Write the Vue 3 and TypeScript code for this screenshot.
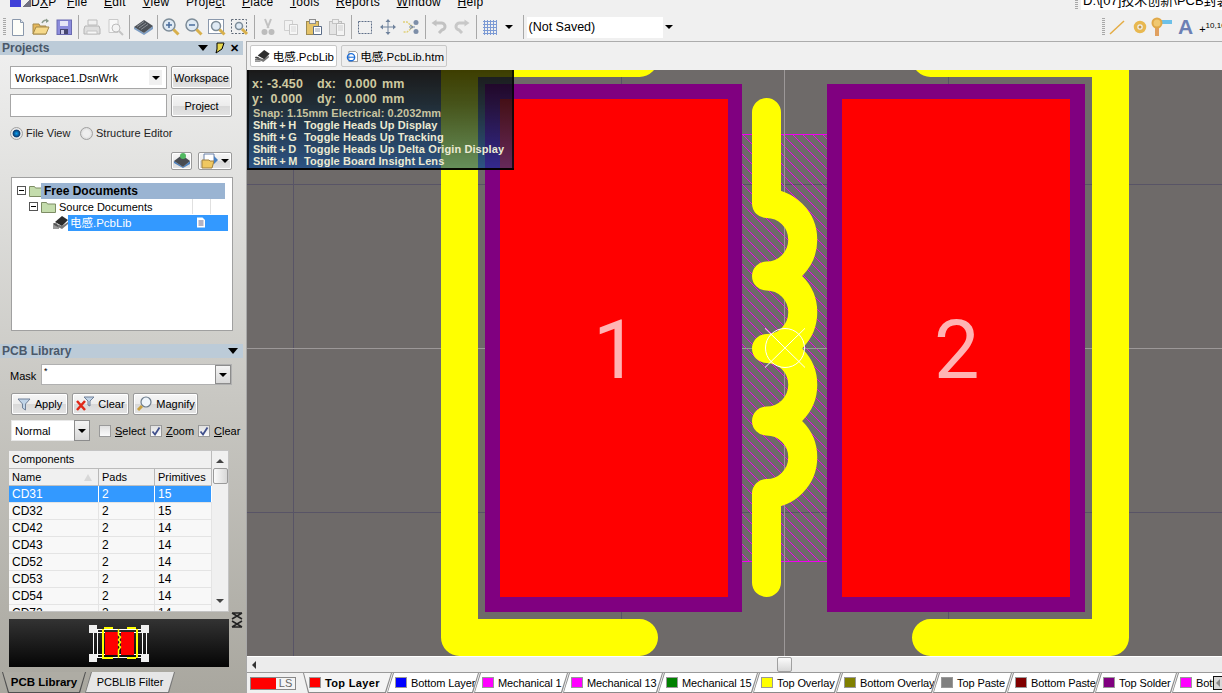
<script setup lang="ts">
const menus: [string, string, string][] = [
  ['', 'F', 'ile'], ['', 'E', 'dit'], ['', 'V', 'iew'], ['Proje', 'c', 't'],
  ['', 'P', 'lace'], ['', 'T', 'ools'], ['', 'R', 'eports'], ['', 'W', 'indow'], ['', 'H', 'elp'],
]
const rows = [
  ['CD31', '2', '15'], ['CD32', '2', '15'], ['CD42', '2', '14'], ['CD43', '2', '14'],
  ['CD52', '2', '14'], ['CD53', '2', '14'], ['CD54', '2', '14'], ['CD72', '2', '14'],
]
const layers = [
  { name: 'Top Layer', color: '#ff0000', width: 89, active: true },
  { name: 'Bottom Layer', color: '#0000ff', width: 92 },
  { name: 'Mechanical 1', color: '#ff00ff', width: 94 },
  { name: 'Mechanical 13', color: '#ff00ff', width: 100 },
  { name: 'Mechanical 15', color: '#008000', width: 100 },
  { name: 'Top Overlay', color: '#ffff00', width: 88 },
  { name: 'Bottom Overlay', color: '#808000', width: 102 },
  { name: 'Top Paste', color: '#808080', width: 79 },
  { name: 'Bottom Paste', color: '#800000', width: 93 },
  { name: 'Top Solder', color: '#800080', width: 82 },
  { name: 'Bottom Solder', color: '#ff00ff', width: 90 },
]
const coils = 'M766.5 112.5V203.5A36.25 36.25 0 0 1 766.5 276A36.25 36.25 0 0 1 766.5 348.5A36.25 36.25 0 0 1 766.5 421A36.25 36.25 0 0 1 766.5 493.5V582.5'
</script>

<template>
  <div class="app">
    <div class="menubar">
      <div class="logo"><i class="logo-a"></i><i class="logo-b"></i></div>
      <span class="dxp">D<u>X</u>P</span>
      <div class="menus">
        <span v-for="m in menus" :key="m[1] + m[2]">{{ m[0] }}<u>{{ m[1] }}</u>{{ m[2] }}</span>
      </div>
      <div class="grip-small"></div>
      <div class="path">D:\[07]技术创新\PCB封装</div>
    </div>

    <div class="toolbar">
      <div class="grip"></div>
      <!-- new -->
      <div class="tb"><svg width="18" height="20" viewBox="0 0 18 20"><path d="M3.5 2.5h8l3 3v13h-11z" fill="#fdfdf8" stroke="#8a98ac"/><path d="M11.5 2.5v3h3" fill="#dfe5ee" stroke="#8a98ac"/></svg></div>
      <!-- open -->
      <div class="tb"><svg width="20" height="20" viewBox="0 0 20 20"><path d="M2 7h6l1 2h6v8H2z" fill="#e6b75a" stroke="#a48a4c"/><path d="M2 17l3-7h13l-3 7z" fill="#f6d98a" stroke="#a48a4c"/><path d="M11 6q2-4 6-2" fill="none" stroke="#8a9a8a" stroke-width="1.5"/><path d="M15 1.5l3 2.5-3 2z" fill="#8a9a8a"/></svg></div>
      <!-- save -->
      <div class="tb"><svg width="18" height="18" viewBox="0 0 18 18"><rect x="2" y="2" width="14.500" height="14.500" fill="#8c8cdc" stroke="#6a6ab0"/><rect x="5" y="3" width="8" height="5" fill="#e6e6f6"/><rect x="5" y="11" width="8" height="5" fill="#45456e"/><rect x="6" y="12" width="3" height="4" fill="#c9c9e6"/></svg></div>
      <div class="sep"></div>
      <!-- print disabled -->
      <div class="tb"><svg width="20" height="20" viewBox="0 0 20 20"><path d="M6 3h9v5H6z" fill="#f0f0f0" stroke="#bcbcbc"/><path d="M3 9h14l1 3v5H2v-5z" fill="#dedede" stroke="#b4b4b4"/><path d="M5 14h10v3H5z" fill="#f6f6f6" stroke="#c4c4c4"/></svg></div>
      <!-- preview disabled -->
      <div class="tb"><svg width="20" height="20" viewBox="0 0 20 20"><path d="M4 2.500h9v13H4z" fill="#f8f8f8" stroke="#cacaca"/><circle cx="11" cy="11" r="4" fill="#f4f4f4" stroke="#bcbcbc"/><path d="M14 14l4 4" stroke="#c4c4c4" stroke-width="2"/></svg></div>
      <div class="sep"></div>
      <!-- chip -->
      <div class="tb"><svg width="22" height="20" viewBox="0 0 22 20"><path d="M2 10l10 6 9-7v3l-9 6-10-6z" fill="#7e9ec4"/><path d="M2 10l10-7 9 6-9 7z" fill="#4d5258"/><path d="M5 9.500l7-5M7 11l7-5M9 12.500l7-5" stroke="#8c9096"/></svg></div>
      <div class="sep"></div>
      <!-- zooms -->
      <div class="tb"><svg width="20" height="20" viewBox="0 0 20 20"><circle cx="8" cy="8" r="6" fill="#dfeaf4" stroke="#7d8c98" stroke-width="1.500"/><path d="M5 8h6M8 5v6" stroke="#4a6c9c" stroke-width="1.500"/><path d="M12.500 12.500l5 5" stroke="#d8b04c" stroke-width="3"/></svg></div>
      <div class="tb"><svg width="20" height="20" viewBox="0 0 20 20"><circle cx="8" cy="8" r="6" fill="#dfeaf4" stroke="#7d8c98" stroke-width="1.500"/><path d="M5 8h6" stroke="#4a6c9c" stroke-width="1.500"/><path d="M12.500 12.500l5 5" stroke="#d8b04c" stroke-width="3"/></svg></div>
      <div class="tb"><svg width="20" height="20" viewBox="0 0 20 20"><rect x="1.500" y="2.500" width="15" height="14" fill="#fff" stroke="#8a98ac"/><circle cx="9" cy="9" r="4.500" fill="#dfeaf4" stroke="#7d8c98" stroke-width="1.500"/><path d="M12.500 12.500l5 5" stroke="#d8b04c" stroke-width="3"/></svg></div>
      <div class="tb"><svg width="20" height="20" viewBox="0 0 20 20"><rect x="1.500" y="2.500" width="15" height="14" fill="#f0f0f0" stroke="#606a78" stroke-dasharray="2 1.500"/><circle cx="9" cy="9" r="3.500" fill="#dfeaf4" stroke="#7d8c98" stroke-width="1.500"/><path d="M12 12l5 5" stroke="#d8b04c" stroke-width="3"/></svg></div>
      <div class="sep"></div>
      <!-- cut -->
      <div class="tb"><svg width="18" height="20" viewBox="0 0 18 20"><path d="M6 2l3.500 9M12 2l-3.500 9" stroke="#c2c2c2" stroke-width="2"/><circle cx="5.500" cy="15" r="3" fill="#bcbcbc"/><circle cx="12.500" cy="15" r="3" fill="#bcbcbc"/></svg></div>
      <div class="tb"><svg width="18" height="20" viewBox="0 0 18 20"><path d="M2.500 3.500h8v10h-8z" fill="#f2f2f2" stroke="#d0d0d0"/><path d="M7.500 7.500h8v10h-8z" fill="#f6f6f6" stroke="#c8c8c8"/><path d="M9 10h5M9 12h5M9 14h5" stroke="#d8d8d8"/></svg></div>
      <div class="tb"><svg width="20" height="20" viewBox="0 0 20 20"><rect x="2.500" y="4.500" width="12" height="13" fill="#e4c268" stroke="#9c8a52"/><rect x="5.500" y="2.500" width="6" height="4" fill="#eee" stroke="#8c8c8c"/><path d="M9.500 9.500h8v8h-8z" fill="#fff" stroke="#5a6c88"/><path d="M11 12h5M11 14h5" stroke="#9aa4b4"/></svg></div>
      <div class="tb"><svg width="20" height="20" viewBox="0 0 20 20"><rect x="2.500" y="4.500" width="12" height="13" fill="#e4e4e4" stroke="#c0c0c0"/><rect x="5.500" y="2.500" width="6" height="4" fill="#eee" stroke="#c4c4c4"/><path d="M9.500 6.500h8v12h-8z" fill="#f4f4f4" stroke="#bcbcbc"/><path d="M11 9h5M11 11h5M11 13h5" stroke="#cfcfcf"/></svg></div>
      <div class="sep"></div>
      <!-- select rect -->
      <div class="tb"><svg width="18" height="18" viewBox="0 0 18 18"><rect x="2.500" y="3.500" width="13" height="12" fill="none" stroke="#5f6f88" stroke-dasharray="2 1"/></svg></div>
      <!-- move -->
      <div class="tb"><svg width="18" height="18" viewBox="0 0 18 18"><path d="M9 2v14M2 9h14" stroke="#6f829c"/><path d="M9 1l2.500 3h-5zM9 17l2.500-3h-5zM1 9l3-2.500v5zM17 9l-3-2.500v5z" fill="#6f829c"/></svg></div>
      <!-- shuffle -->
      <div class="tb"><svg width="20" height="18" viewBox="0 0 20 18"><path d="M2 4h4l6 5-6 5H2" fill="none" stroke="#e0d07a" stroke-dasharray="2 1" stroke-width="1.500"/><path d="M8 9h6" stroke="#7a8ca4"/><circle cx="15" cy="4.500" r="2.500" fill="#7d8ea8"/><circle cx="15" cy="13.500" r="2.500" fill="#7d8ea8"/><path d="M9 7l3 2-3 2" fill="none" stroke="#7a8ca4"/></svg></div>
      <div class="sep"></div>
      <!-- undo / redo -->
      <div class="tb"><svg width="18" height="18" viewBox="0 0 18 18"><path d="M5 5h6a3.500 3.500 0 0 1 1 7l-3 3" fill="none" stroke="#c2c2c2" stroke-width="3"/><path d="M1.500 5l5-3.500v7z" fill="#c2c2c2"/></svg></div>
      <div class="tb"><svg width="18" height="18" viewBox="0 0 18 18"><path d="M13 5H7a3.500 3.500 0 0 0-1 7l3 3" fill="none" stroke="#c8c8c8" stroke-width="3"/><path d="M16.500 5l-5-3.500v7z" fill="#c8c8c8"/></svg></div>
      <div class="sep"></div>
      <!-- grid -->
      <div class="tb"><svg width="16" height="16" viewBox="0 0 16 16"><path d="M1 2.500h14M1 5.500h14M1 8.500h14M1 11.500h14M1 14.500h14M2.500 1v15M5.500 1v15M8.500 1v15M11.500 1v15M14.500 1v15" stroke="#7c9ad4"/></svg></div>
      <div class="tb-drop"><i class="arrow"></i></div>
      <div class="sep sep-combo"></div>
      <div class="combo-saved">
        <span>(Not Saved)</span>
        <div class="saved-drop"><i class="arrow"></i></div>
      </div>
      <div class="spring"></div>
      <div class="grip grip-r"></div>
      <div class="tools-r">
        <svg width="18" height="18" viewBox="0 0 18 18"><path d="M2 16L16 3" stroke="#e4ac44" stroke-width="1.500"/></svg>
        <svg width="18" height="18" viewBox="0 0 18 18"><circle cx="9" cy="9" r="4.500" fill="none" stroke="#e8b850" stroke-width="3.500"/><circle cx="9" cy="9" r="1.500" fill="#c49848"/></svg>
        <svg class="via" width="24" height="20" viewBox="0 0 24 20"><rect x="10" y="3" width="13" height="4" fill="#6cc0e8"/><path d="M6 9h4v10H6z" fill="#e0a060"/><circle cx="8" cy="6" r="4.500" fill="#f0c870" stroke="#e0a848" stroke-width="2"/></svg>
        <span class="big-a">A</span>
        <span class="coord"><b>+</b><sup>10,10</sup></span>
      </div>
    </div>

    <div class="main">
      <aside class="side">
        <div class="ph">
          <span>Projects</span>
          <i class="arrow big"></i>
          <svg class="pin" width="12" height="12" viewBox="0 0 12 12"><path d="M4 1h7L9 7 3 11l1-4z" fill="#e8d850" stroke="#000"/></svg>
          <span class="ph-x">✕</span>
        </div>
        <div class="wsrow r1">
          <div class="fld"><span>Workspace1.DsnWrk</span><div class="mini-drop"><i class="arrow"></i></div></div>
          <button class="btn">Workspace</button>
        </div>
        <div class="wsrow r2">
          <div class="fld"></div>
          <button class="btn">Project</button>
        </div>
        <div class="radios">
          <i class="radio on"></i><span class="lab-file">File View</span>
          <i class="radio"></i><span>Structure Editor</span>
        </div>
        <div class="iconbtns">
          <button class="btn ibtn"><svg width="18" height="16" viewBox="0 0 18 16"><path d="M1 8l9 6 7-6v3l-7 4-9-5z" fill="#4a80c0"/><path d="M1 8l8-6 8 6-7 6z" fill="#484c52"/><circle cx="10" cy="3" r="3" fill="#50b860"/></svg></button>
          <button class="btn ibtn2"><svg width="18" height="16" viewBox="0 0 18 16"><path d="M3 1h10v9H3z" fill="#fff" stroke="#6880a8"/><path d="M1 7h7l1 1h4l-2 7H1z" fill="#f0c860" stroke="#a08040"/><path d="M13 3l4 4-4 4z" fill="#4a80c0"/></svg><i class="arrow"></i></button>
        </div>
        <div class="tree">
          <div class="trow t1">
            <i class="exp"></i><svg class="folder" width="15" height="13" viewBox="0 0 15 13"><path d="M.5 2.500h5l1 1.500h8v8.500H.5z" fill="#c4dcac" stroke="#7d8c64"/></svg>
            <span class="hl-free">Free Documents</span>
          </div>
          <div class="trow t2">
            <i class="exp"></i><svg class="folder" width="15" height="13" viewBox="0 0 15 13"><path d="M.5 2.500h5l1 1.500h8v8.500H.5z" fill="#c4dcac" stroke="#7d8c64"/></svg>
            <span class="srcdocs">Source Documents</span><i class="cellb"></i><i class="cellb"></i>
          </div>
          <div class="trow t3">
            <svg width="16" height="15" viewBox="0 0 16 15"><path d="M1 10l8 4 6-5v-2l-6 4-8-3z" fill="#777"/><path d="M2 7l7-6 6 4-6 6z" fill="#2c2c2c"/><path d="M0 9h4M0 11h5M0 13h6" stroke="#333"/></svg>
            <span class="hl-sel">电感.PcbLib<svg width="10" height="11" viewBox="0 0 10 11"><path d="M1 .5h5.500L9 3v7.500H1z" fill="#fff"/><path d="M2.500 4h5M2.500 6h5M2.500 8h5" stroke="#668"/></svg></span>
          </div>
        </div>

        <div class="ph ph2">
          <span>PCB Library</span>
          <i class="arrow big"></i>
        </div>
        <div class="maskrow">
          <span class="mask-lab">Mask</span>
          <div class="mask-fld"><span>*</span><div class="sq-drop"><i class="arrow"></i></div></div>
        </div>
        <div class="btnrow">
          <button class="btn b-apply"><svg width="14" height="14" viewBox="0 0 14 14"><path d="M1 2h12L8.500 7v6l-3-2V7z" fill="#c0d4e8" stroke="#708098"/></svg>Apply</button>
          <button class="btn b-clear"><svg width="20" height="16" viewBox="0 0 20 16"><path d="M1 5l8 9M9 5l-8 9" stroke="#e02818" stroke-width="2.500"/><path d="M8 1h10l-4 4v5l-2-1V5z" fill="#c0d4e8" stroke="#708098"/></svg>Clear</button>
          <button class="btn b-mag"><svg width="16" height="16" viewBox="0 0 16 16"><circle cx="10" cy="6" r="5" fill="#eef4fa" stroke="#6c7c8c" stroke-width="1.200"/><path d="M6 10l-4 4" stroke="#c8a040" stroke-width="3"/></svg>Magnify</button>
        </div>
        <div class="normrow">
          <div class="norm-fld"><span>Normal</span><div class="sq-drop"><i class="arrow"></i></div></div>
          <label class="cb"><i class="box"></i><span><u>S</u>elect</span></label>
          <label class="cb cb-z"><i class="box on"><svg width="10" height="10" viewBox="0 0 10 10"><path d="M1.500 5.500L4 8.500 8.500 1.500" fill="none" stroke="#40508c" stroke-width="1.800"/></svg></i><span><u>Z</u>oom</span></label>
          <label class="cb cb-c"><i class="box on"><svg width="10" height="10" viewBox="0 0 10 10"><path d="M1.500 5.500L4 8.500 8.500 1.500" fill="none" stroke="#40508c" stroke-width="1.800"/></svg></i><span><u>C</u>lear Existing</span></label>
        </div>
        <div class="ctable">
          <div class="ctable-body">
            <div class="cap">Components</div>
            <div class="grid-row head">
              <span class="name-h">Name<i class="sort"></i></span><span>Pads</span><span>Primitives</span>
            </div>
            <div v-for="(r, i) in rows" :key="r[0]" class="grid-row" :class="{ sel: i === 0 }">
              <span>{{ r[0] }}</span><span>{{ r[1] }}</span><span>{{ r[2] }}</span>
            </div>
          </div>
          <div class="vscroll">
            <i class="up"></i>
            <i class="thumb"></i>
            <i class="dn"></i>
          </div>
        </div>
        <div class="prevrow">
          <div class="preview">
            <svg width="220" height="48" viewBox="0 0 220 48" shape-rendering="crispEdges">
              <path d="M84 10.500h53M84 13.500h53M84 38.500h53M84 35.500h53M84.500 10v28M88.500 10v28M133.500 10v28M137.500 10v28" stroke="#fff" fill="none"/>
              <path d="M93.500 10v29M127.500 10v29" stroke="#ff0" stroke-width="2" fill="none"/>
              <path d="M95 9h9M118 9h9" stroke="#ff0" stroke-width="2"/>
              <path d="M93 39h11M118 39h9" stroke="#ff0" stroke-width="2"/>
              <rect x="96" y="13" width="13" height="23" fill="#f00"/>
              <rect x="112" y="13" width="13" height="23" fill="#f00"/>
              <path d="M109.500 10v6l2 2-2 3 2 2-2 3 2 2-2 3v8" fill="none" stroke="#ff0" stroke-width="1.500" shape-rendering="auto"/>
              <rect x="80" y="6" width="8" height="8" fill="#f0f0f0"/>
              <rect x="132" y="6" width="8" height="8" fill="#f0f0f0"/>
              <rect x="80" y="35" width="8" height="8" fill="#f0f0f0"/>
              <rect x="132" y="35" width="8" height="8" fill="#f0f0f0"/>
            </svg>
          </div>
          <svg class="xpand" width="12" height="16" viewBox="0 0 12 16"><path d="M1 1h10M1 1l10 6M11 1L1 7M1 15h10M1 15L11 9M11 15L1 9" fill="none" stroke="#222" stroke-width="1.500"/></svg>
        </div>
        <div class="sidetabs">
          <div class="stab active"><div><b>PCB Library</b></div></div>
          <div class="stab"><div>PCBLIB Filter</div></div>
        </div>
      </aside>

      <section class="work">
        <div class="doctabs">
          <div class="doctab">
            <svg width="18" height="16" viewBox="0 0 17 15"><path d="M1 10l8 4 6-5v-2l-6 4-8-3z" fill="#777"/><path d="M3 7l7-6 6 4-6 6z" fill="#2c2c2c"/><path d="M0 9h4M0 11h5M0 13h6" stroke="#333"/></svg>
            <span>电感.PcbLib</span>
          </div>
          <div class="doctab dim">
            <svg width="18" height="17" viewBox="0 0 17 16"><path d="M4 1h9l3 3v11H4z" fill="#fff" stroke="#777"/><circle cx="7" cy="9" r="5" fill="none" stroke="#1a6cd8" stroke-width="2"/><path d="M3 9h8" stroke="#1a6cd8" stroke-width="1.500"/></svg>
            <span>电感.PcbLib.htm</span>
          </div>
        </div>
        <div class="canvas">
          <svg class="board" width="975" height="586" viewBox="247 70 975 586" shape-rendering="crispEdges">
            <defs>
              <pattern id="hatch" x="742" y="134" width="10" height="10" patternUnits="userSpaceOnUse">
                <path d="M-1 -1L11 11" stroke="#f000f0" stroke-width="1"/>
              </pattern>
            </defs>
            <path d="M293.500 70V656M621.500 70V656M948.500 70V656M247 184.500H1222M247 512.500H1222" stroke="#585466" fill="none"/>
            <rect x="742" y="134" width="85" height="428" fill="url(#hatch)"/>
            <path d="M742 134.500H827M742 561.500H827" stroke="#f000f0"/>
            <path d="M784.500 70V656M247 348.500H1222" stroke="#9c9898"/>
            <rect x="485" y="84" width="257" height="528" fill="#800080"/>
            <rect x="500" y="99" width="227.500" height="498" fill="#ff0000"/>
            <rect x="827" y="84" width="258" height="528" fill="#800080"/>
            <rect x="842" y="99" width="228" height="498" fill="#ff0000"/>
            <g fill="none" stroke="#ffff00" stroke-linecap="round" stroke-linejoin="round" shape-rendering="auto">
              <path d="M639.500 58.500H459.500V637.500H639.500" stroke-width="37"/>
              <path d="M930.500 58.500H1110.500V637.500H930.500" stroke-width="37"/>
              <path :d="coils" stroke-width="29"/>
            </g>
            <g fill="none" stroke="#fff" shape-rendering="auto">
              <circle cx="785" cy="348" r="19.500"/>
              <path d="M765 328.300L805 367.500M805 328.300L765 367.500"/>
            </g>
          </svg>
          <span class="padnum pad1">1</span>
          <span class="padnum pad2">2</span>
          <div class="hud">
            <div class="hud-big"><span class="c1">x: -3.450</span><span class="c2">dx:</span><span class="c3">0.000</span><span>mm</span></div>
            <div class="hud-big"><span class="c1">y:&nbsp;&nbsp;0.000</span><span class="c2">dy:</span><span class="c3">0.000</span><span>mm</span></div>
            <div class="hud-snap">Snap: 1.15mm Electrical: 0.2032mm</div>
            <div class="hud-key"><span>Shift + H</span><span>Toggle Heads Up Display</span></div>
            <div class="hud-key"><span>Shift + G</span><span>Toggle Heads Up Tracking</span></div>
            <div class="hud-key"><span>Shift + D</span><span>Toggle Heads Up Delta Origin Display</span></div>
            <div class="hud-key"><span>Shift + M</span><span>Toggle Board Insight Lens</span></div>
          </div>
        </div>
        <div class="hscroll">
          <i class="left"></i>
          <i class="hthumb"></i>
        </div>
        <div class="layerbar">
          <div class="curlayer"><i></i><span>LS</span></div>
          <div
            v-for="l in layers"
            :key="l.name"
            class="ltab"
            :class="{ active: l.active }"
            :style="{ width: l.width + 'px' }"
          >
            <div class="ltab-in">
              <i class="swatch" :style="{ background: l.color }"></i>
              <span>{{ l.name }}</span>
            </div>
          </div>
          <div class="navbtn"><i></i></div>
        </div>
      </section>
    </div>
  </div>
</template>

<style>
html, body { margin: 0; overflow: hidden; background: #f0f0f0; }
</style>

<style scoped>
* { box-sizing: border-box; }
.app {
  width: 1222px; height: 693px; display: flex; flex-direction: column; overflow: hidden;
  font-family: "Liberation Sans", "Noto Sans CJK SC", sans-serif; font-size: 11px; color: #000; background: #f0f0f0;
}
i { display: block; font-style: normal; }
.menubar { height: 10px; display: flex; align-items: flex-end; font-size: 12px; overflow: hidden; position: relative; }
.logo { width: 23px; height: 10px; margin-left: 10px; display: flex; align-self: flex-start; }
.logo-a { width: 11px; height: 7px; background: #4040d8; }
.logo-b { width: 10px; height: 7px; background: linear-gradient(135deg, #f0f0f0 50%, #707080 50%); }
.dxp { margin-left: -2px; width: 36px; line-height: 14px; transform: translateY(-1px); flex: none; letter-spacing: .3px; }
.menus { display: flex; gap: 16.500px; line-height: 14px; transform: translateY(-1px); letter-spacing: .3px; white-space: nowrap; }
.grip-small { position: absolute; left: 1075px; top: 0; width: 3px; height: 10px; background: repeating-linear-gradient(#a8a8a8 0 1px, transparent 1px 2px); }
.path { position: absolute; left: 1081px; right: 0; top: -8px; height: 18px; background: #fff; padding-left: 2px; line-height: 18px; font-size: 13px; white-space: nowrap; overflow: hidden; }
.toolbar { height: 31px; display: flex; align-items: center; padding-top: 3px; }
.grip { width: 3px; height: 18px; margin-left: 3px; margin-right: .5px; background: repeating-linear-gradient(#a8a8a8 0 1px, transparent 1px 2px); flex: none; }
.tb { width: 23px; height: 24px; display: flex; align-items: center; justify-content: center; flex: none; }
.sep { width: 1px; height: 24px; margin: 0 2px; background: #a8a8a8; flex: none; }
.tb-drop { width: 14px; display: flex; justify-content: center; }
.arrow { width: 0; height: 0; border-left: 4px solid transparent; border-right: 4px solid transparent; border-top: 4px solid #000; }
.sep-combo { margin-left: 7px; margin-right: 3px; }
.combo-saved { width: 148px; height: 21px; background: #fff; display: flex; align-items: center; padding-left: 2px; font-size: 12.500px; justify-content: space-between; }
.saved-drop { width: 12px; height: 21px; background: #f0f0f0; display: flex; align-items: center; justify-content: center; }
.spring { flex: 1; }
.grip-r { margin-right: 3px; }
.tools-r { width: 114px; display: flex; align-items: center; gap: 5px; height: 24px; flex: none; }
.tools-r svg { flex: none; }
.via { margin-left: -5px; }
.big-a { font-size: 21px; color: #6d80b4; font-weight: 700; line-height: 24px; }
.coord { font-size: 8px; white-space: nowrap; transform: translateY(2px); margin-left: 1px; }
.coord b { font-weight: 400; font-size: 11px; }
.coord sup { font-size: 8px; vertical-align: 5px; line-height: 0; }

.main { flex: 1; display: flex; min-height: 0; }
.side {
  width: 247px; flex: none; display: flex; flex-direction: column; overflow: hidden;
  background: linear-gradient(#f0f0f0 0, #e2e2e0 20%, #c8c7c2 55%, #a9a79f 100%); border-right: 1px solid #a8a8a8;
}
.ph { height: 14px; background: #bccbd8; display: flex; align-items: center; color: #4a586a; font-weight: 700; font-size: 12px; padding-left: 2px; margin-right: 3px; flex: none; }
.ph .arrow.big { margin-left: auto; border-left-width: 5px; border-right-width: 5px; border-top-width: 6px; }
.ph > span:first-child { margin-right: auto; }
.pin { margin-left: 5px; }
.ph-x { margin-left: 5px; margin-right: 4px; color: #000; font-size: 11px; }
.wsrow { display: flex; padding-left: 10px; gap: 4px; height: 23px; flex: none; }
.r1 { margin-top: 11px; } .r2 { margin-top: 5px; }
.fld { width: 157px; border: 1px solid #a6a6a6; background: #fff; display: flex; align-items: center; padding-left: 4px; justify-content: space-between; font-size: 11px; }
.mini-drop { width: 13px; height: 15px; margin-right: 4px; background: #f0f0f0; display: flex; align-items: center; justify-content: center; }
.btn {
  font: inherit; font-size: 11px; padding: 0; color: #000; display: flex; align-items: center; justify-content: center;
  border: 1px solid #9a9a9a; border-radius: 2px; background: linear-gradient(#f6f6f6 0, #ececec 50%, #d8d8d8 51%, #e4e4e4 100%); box-shadow: inset 0 0 0 1px #fff;
}
.wsrow .btn { width: 61px; }
.radios { height: 14px; margin-top: 9px; padding-left: 10px; display: flex; align-items: center; gap: 3px; flex: none; font-size: 11px; color: #222; }
.radio { width: 13px; height: 13px; border-radius: 50%; border: 1px solid #a0a0a0; background: radial-gradient(#eee 40%, #ccc); flex: none; }
.radio.on { background: radial-gradient(#0ba0f0 0, #0a3a70 45%, #e8e8e8 55%); }
.lab-file { width: 51px; }
.iconbtns { height: 18px; margin-top: 12px; display: flex; padding-left: 171px; gap: 6px; flex: none; }
.ibtn { width: 21px; } .ibtn2 { width: 34px; gap: 2px; }
.tree { margin: 7px 0 0 11px; width: 222px; height: 154px; flex: none; background: #fff; border: 1px solid #a0a0a0; padding-top: 4px; font-size: 11px; }
.trow { display: flex; align-items: center; }
.exp { width: 9px; height: 9px; border: 1px solid #555; background: linear-gradient(#000,#000) center/5px 1px no-repeat; flex: none; }
.t1 { height: 17px; padding-left: 5px; }
.folder { margin-left: 3px; flex: none; }
.hl-free { background: #9ab4d2; width: 184px; height: 16px; margin-left: -3px; padding-left: 3px; font-weight: 700; font-size: 12px; line-height: 16px; white-space: nowrap; }
.t2 { height: 15px; padding-left: 17px; }
.srcdocs { margin-left: 3px; width: 133px; }
.cellb { width: 18px; height: 15px; border-left: 1px solid #e0e0e0; }
.t3 { height: 17px; padding-left: 41px; }
.hl-sel { background: #3399ff; color: #fff; width: 160px; height: 16px; margin-left: -1px; padding-left: 2px; line-height: 16px; font-size: 11.500px; display: flex; align-items: center; justify-content: space-between; padding-right: 22px; }
.ph2 { margin-top: 13px; }
.ph2 .arrow.big { margin-right: 5px; }
.maskrow { height: 21px; margin-top: 6px; padding-left: 10px; display: flex; align-items: center; flex: none; }
.mask-lab { width: 31px; position: relative; top: 1px; }
.mask-fld { width: 191px; height: 21px; background: #fff; border: 1px solid #b0b0b0; display: flex; justify-content: space-between; padding-left: 2px; font-size: 9px; line-height: 12px; }
.sq-drop { width: 16px; height: 19px; border: 1px solid #8c8c8c; background: linear-gradient(#f4f4f4,#d8d8d8); display: flex; align-items: center; justify-content: center; flex: none; }
.btnrow { height: 22px; margin-top: 8px; padding-left: 11px; display: flex; gap: 4px; flex: none; }
.btnrow .btn { gap: 4px; }
.b-apply { width: 57px; } .b-clear { width: 57px; gap: 2px !important; } .b-mag { width: 65px; }
.normrow { height: 21px; margin-top: 5px; padding-left: 11px; display: flex; align-items: center; white-space: nowrap; overflow: hidden; flex: none; width: 243px; font-size: 11px; }
.norm-fld { width: 79px; height: 21px; background: #fff; display: flex; justify-content: space-between; align-items: center; padding-left: 3px; flex: none; border: 1px solid #e8e8e8; border-right: 0; }
.norm-fld .sq-drop { height: 21px; }
.cb { display: flex; align-items: center; gap: 4px; margin-left: 9px; width: 47px; flex: none; }
.cb-z { margin-left: 4px; width: 44px; } .cb-c { margin-left: 4px; width: 80px; }
.box { width: 12px; height: 12px; border: 1px solid #9a9a9a; background: linear-gradient(#e0e0e0,#fbfbfb); flex: none; }
.box svg { display: block; }
.ctable { margin: 9px 0 0 9px; width: 220px; height: 162px; display: flex; flex: none; overflow: hidden; border: 1px solid #c4c4c4; border-left: 0; background: #f8f8f8; }
.ctable-body { width: 203px; overflow: hidden; flex: none; }
.cap { height: 18px; line-height: 17px; padding-left: 3px; background: #f0f0f0; border-bottom: 1px solid #bbb; border-right: 1px solid #bbb; font-size: 11px; }
.grid-row { display: grid; grid-template-columns: 90px 56px 57px; height: 17px; line-height: 16px; border-bottom: 1px solid #e4e4e4; font-size: 12px; background: #f8f8f8; }
.grid-row span { padding-left: 3px; border-right: 1px solid #e4e4e4; }
.head { background: #f0f0f0; border-bottom: 1px solid #c0c0c0; height: 17px; font-size: 11px; }
.head span { padding-left: 3px; border-right: 1px solid #b8b8b8; }
.name-h { position: relative; }
.sort { position: absolute; right: 6px; top: 5px; width: 0; height: 0; border-left: 4px solid transparent; border-right: 4px solid transparent; border-bottom: 7px solid #d8d8d8; }
.sel { background: #3399ff; color: #fff; }
.sel span { border-right-color: #fff; }
.vscroll { flex: 1; background: #f0f0f0; position: relative; display: flex; flex-direction: column; align-items: center; }
.up { margin-top: 8px; width: 0; border-left: 4px solid transparent; border-right: 4px solid transparent; border-bottom: 4px solid #444; }
.thumb { margin-top: 5px; width: 15px; height: 16px; border: 1px solid #9a9a9a; border-radius: 2px; background: linear-gradient(90deg, #fafafa, #d8d8d8); }
.dn { margin-top: auto; margin-bottom: 8px; width: 0; border-left: 4px solid transparent; border-right: 4px solid transparent; border-top: 4px solid #444; }
.prevrow { margin-top: 7px; height: 48px; padding-left: 9px; display: flex; flex: none; gap: 1px; }
.preview { width: 220px; height: 48px; background: linear-gradient(#333, #050505); }
.preview svg { display: block; }
.xpand { margin-left: 1px; margin-top: -7px; }
.sidetabs { margin-top: 5px; height: 21px; padding-left: 2px; display: flex; flex: none; font-size: 11px; }
.stab { height: 21px; position: relative; }
.stab > div { height: 20px; line-height: 20px; text-align: center; }
.stab.active { width: 84px; background: #505050; clip-path: polygon(0 0, 100% 0, calc(100% - 6px) 100%, 6px 100%); }
.stab.active > div { background: #aeaca4; font-size: 11.500px; clip-path: polygon(1px 0, calc(100% - 1px) 0, calc(100% - 7px) 100%, 7px 100%); }
.stab:not(.active) { width: 90px; margin-left: -1px; background: #777; clip-path: polygon(6px 0, 100% 0, calc(100% - 6px) 100%, 0 100%); }
.stab:not(.active) > div { background: #e6e6e6; clip-path: polygon(7px 0, calc(100% - 1px) 0, calc(100% - 7px) 100%, 1px 100%); }

.work { flex: 1; min-width: 0; display: flex; flex-direction: column; }
.doctabs { height: 29px; border-top: 1px solid #acacac; display: flex; padding: 3px 0 0 3px; gap: 4px; flex: none; }
.doctab { height: 22px; border: 1px solid #c8c8c8; border-radius: 2px; background: #fff; display: flex; align-items: center; padding: 0 2px 0 4px; gap: 2px; font-size: 11.500px; white-space: nowrap; width: 87px; }
.doctab.dim { background: #efefef; width: 106px; }
.canvas { height: 586px; background: #6e6a69; position: relative; overflow: hidden; flex: none; }
.board { display: block; }
.padnum { position: absolute; top: 241px; font-family: Roboto, "Liberation Sans", sans-serif; font-size: 81px; line-height: 80px; color: #ffb3b3; font-weight: 400; }
.pad1 { left: 346px; } .pad2 { left: 687px; }
.hud {
  position: absolute; left: 0; top: 0; width: 267px; height: 100px; padding: 7px 0 0 3px; font-weight: 700; color: #ecead2; white-space: nowrap;
  background: linear-gradient(rgba(0,0,0,.76) 0, rgba(6,24,36,.74) 35%, rgba(0,68,150,.6) 100%);
  border-left: 2px solid rgba(0,0,0,.7); border-right: 2px solid rgba(0,0,0,.7); border-bottom: 2px solid rgba(0,0,0,.85);
}
.hud-big { display: flex; height: 15px; line-height: 15px; font-size: 12.500px; color: #cec9a0; letter-spacing: .1px; }
.c1 { width: 65px; } .c2 { width: 28px; } .c3 { width: 37px; }
.hud-snap { height: 12px; line-height: 12px; font-size: 11px; color: #c8c4a0; padding-left: 1px; letter-spacing: .05px; }
.hud-key { display: flex; height: 12px; line-height: 12px; font-size: 11px; padding-left: 1px; letter-spacing: .1px; }
.hud-key span:first-child { width: 51px; letter-spacing: -.2px; }
.hscroll { height: 16px; background: #ececec; position: relative; display: flex; align-items: center; flex: none; border-top: 1px solid #fff; }
.left { margin-left: 5px; width: 0; border-top: 4px solid transparent; border-bottom: 4px solid transparent; border-right: 4px solid #333; }
.hthumb { position: absolute; left: 530px; top: 0; width: 15px; height: 15px; border: 1px solid #a0a0a0; border-radius: 2px; background: linear-gradient(#fbfbfb, #d8d8d8); }
.layerbar { height: 21px; display: flex; position: relative; border-top: 1px solid #9a9a9a; flex: none; overflow: hidden; padding-left: 3px; background: #f0f0f0; }
.curlayer { width: 46px; height: 13px; margin-top: 4px; margin-right: 7px; border: 1px solid #888; display: flex; flex: none; background: #f4f4f4; }
.curlayer i { width: 25px; background: #ff0000; }
.curlayer span { flex: 1; text-align: center; font-size: 11px; line-height: 11px; color: #666; }
.ltab { height: 20px; flex: none; background: #8a8a8a; clip-path: polygon(6px 0, 100% 0, calc(100% - 6px) 100%, 0 100%); margin-right: -5px; }
.ltab-in { height: 19px; background: #fff; clip-path: polygon(7px 0, calc(100% - 1px) 0, calc(100% - 7px) 100%, 1px 100%); display: flex; align-items: center; padding-left: 9px; gap: 5px; white-space: nowrap; font-size: 11px; letter-spacing: -.1px; overflow: hidden; }
.ltab.active { clip-path: polygon(0 0, 100% 0, calc(100% - 6px) 100%, 5px 100%); }
.ltab.active .ltab-in { background: #f4f4f4; font-weight: 700; clip-path: polygon(1px 0, calc(100% - 1px) 0, calc(100% - 7px) 100%, 6px 100%); padding-left: 7px; letter-spacing: .35px; }
.swatch { width: 10px; height: 9px; box-shadow: 0 0 0 1px #999; flex: none; }
.navbtn { position: absolute; right: 0; top: 3px; width: 9px; height: 14px; background: #d8d8d8; border: 1px solid #111; border-right: 0; display: flex; align-items: center; justify-content: center; }
.navbtn i { width: 0; border-top: 4px solid transparent; border-bottom: 4px solid transparent; border-right: 4px solid #888; }
u { text-decoration-thickness: 1px; }
</style>
